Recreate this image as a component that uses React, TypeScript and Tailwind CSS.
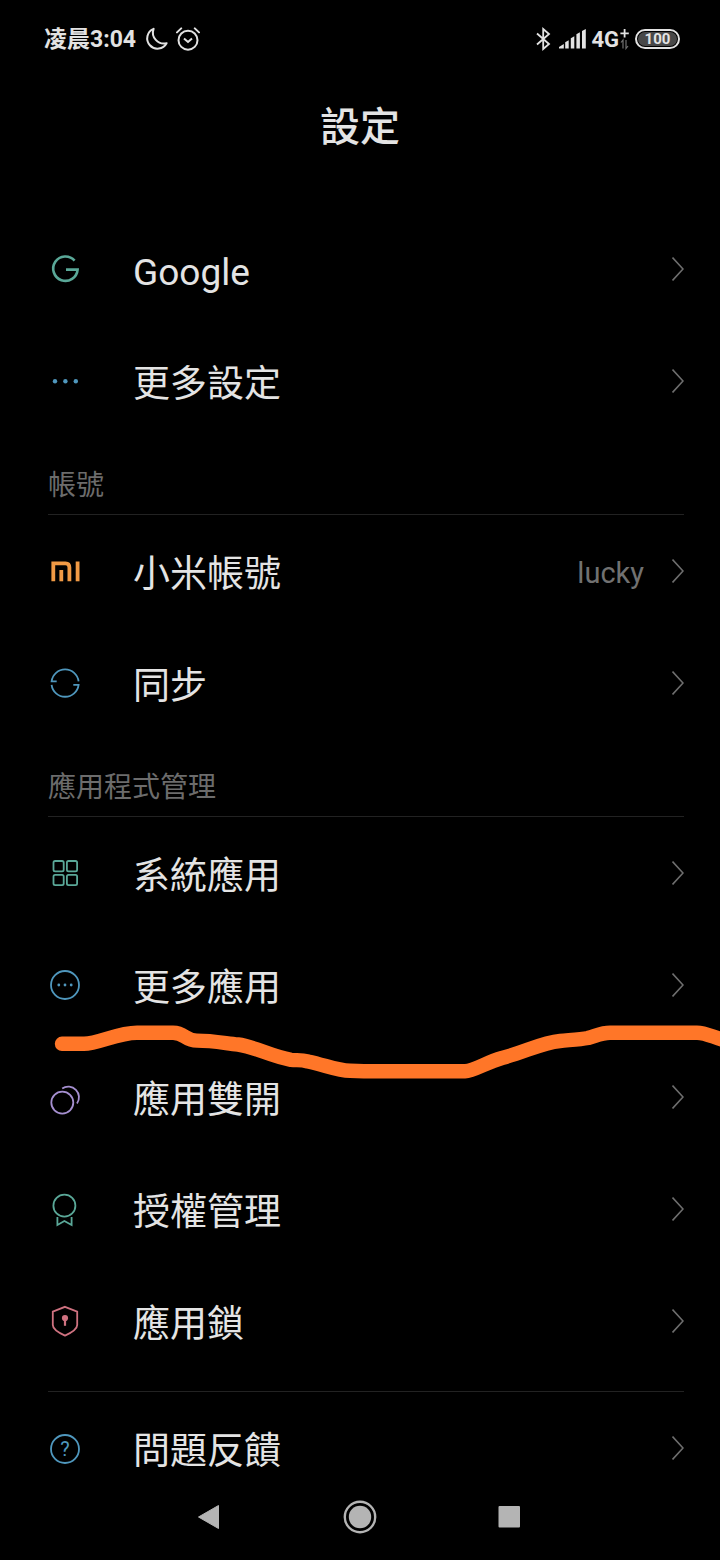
import type { ReactNode } from 'react';

type Item = {
  label: string;
  icon: ReactNode;
  value?: string;
  marked?: boolean;
};

type Section = {
  id: string;
  title?: string;
  divider?: boolean;
  items: Item[];
};

function Icon({ className, children }: { className: string; children: ReactNode }) {
  return (
    <svg
      viewBox="0 0 34 34"
      fill="none"
      stroke="currentColor"
      strokeWidth="1.8"
      className={`size-[34px] shrink-0 overflow-visible ${className}`}
      aria-hidden="true"
    >
      {children}
    </svg>
  );
}

const sections: Section[] = [
  {
    id: 'general',
    items: [
      {
        label: 'Google',
        icon: (
          <Icon className="text-[#5aa898]">
            <path d="M26.6 8.6A12.2 12.2 0 1 0 29.6 17.6H18" strokeWidth="2.6" />
          </Icon>
        ),
      },
      {
        label: '更多設定',
        icon: (
          <Icon className="text-[#4f97bd]">
            <g fill="currentColor" stroke="none">
              <circle cx="7" cy="17.2" r="2.2" />
              <circle cx="17.4" cy="17.2" r="2.2" />
              <circle cx="27.8" cy="17.2" r="2.2" />
            </g>
          </Icon>
        ),
      },
    ],
  },
  {
    id: 'account',
    title: '帳號',
    items: [
      {
        label: '小米帳號',
        value: 'lucky',
        icon: (
          <Icon className="text-[#f19a45]">
            <g strokeWidth="3.8">
              <path d="M5.3 27.3V9.4H17.5Q21.4 9.4 21.4 13.6V27.3" />
              <path d="M13.3 16V27.3" />
              <path d="M29.6 7.5V27.3" />
            </g>
          </Icon>
        ),
      },
      {
        label: '同步',
        icon: (
          <Icon className="text-[#4f97bd]">
            <path d="M8.7 15.4H3.6A13.6 13.6 0 0 1 30.6 15.4" />
            <path d="M25.3 18.8H30.6A13.6 13.6 0 0 1 3.6 18.8" />
          </Icon>
        ),
      },
    ],
  },
  {
    id: 'apps',
    title: '應用程式管理',
    items: [
      {
        label: '系統應用',
        icon: (
          <Icon className="text-[#5aa898]">
            <rect x="5.5" y="5" width="10.2" height="10.4" rx="1.6" />
            <rect x="18.9" y="5" width="10.2" height="10.4" rx="1.6" />
            <rect x="5.5" y="18.8" width="10.2" height="10.4" rx="1.6" />
            <rect x="18.9" y="18.8" width="10.2" height="10.4" rx="1.6" />
          </Icon>
        ),
      },
      {
        label: '更多應用',
        marked: true,
        icon: (
          <Icon className="text-[#4f97bd]">
            <circle cx="17" cy="17" r="14" />
            <g fill="currentColor" stroke="none">
              <circle cx="10.8" cy="17" r="1.4" />
              <circle cx="17" cy="17" r="1.4" />
              <circle cx="23.2" cy="17" r="1.4" />
            </g>
          </Icon>
        ),
      },
      {
        label: '應用雙開',
        icon: (
          <Icon className="text-[#a58fd0]">
            <circle cx="14.3" cy="22.6" r="11" />
            <path d="M14.2 8.5A10.7 10.7 0 0 1 29 23.5" />
          </Icon>
        ),
      },
      {
        label: '授權管理',
        icon: (
          <Icon className="text-[#5aa898]">
            <circle cx="16.4" cy="13.7" r="11" />
            <path d="M9.4 25V33L16.4 29L23.6 33V25" />
          </Icon>
        ),
      },
      {
        label: '應用鎖',
        icon: (
          <Icon className="text-[#cf7280]">
            <path d="M17 2.8L29.2 7.6V21C29.2 24.5 24.5 28.2 17 31.6C9.5 28.2 4.8 24.5 4.8 21V7.6Z" />
            <circle cx="17" cy="14" r="3.1" fill="currentColor" stroke="none" />
            <path d="M17 14V21.8" strokeWidth="2.2" />
          </Icon>
        ),
      },
    ],
  },
  {
    id: 'feedback',
    divider: true,
    items: [
      {
        label: '問題反饋',
        icon: (
          <Icon className="text-[#4f97bd]">
            <circle cx="17" cy="18" r="14" />
            <text
              x="17"
              y="25"
              textAnchor="middle"
              fill="currentColor"
              stroke="none"
              className="font-[Roboto,sans-serif] text-[20px]"
            >
              ?
            </text>
          </Icon>
        ),
      },
    ],
  },
];

function StatusBar() {
  return (
    <div className="flex h-[78px] shrink-0 items-center justify-between pr-10 pl-11 text-[#e2e2e2]">
      <div className="flex items-center gap-2">
        <span className="pt-0.5 text-[23px] leading-8 font-bold">凌晨3:04</span>
        <svg viewBox="0 0 24 24" fill="none" stroke="currentColor" strokeWidth="2" strokeLinejoin="round" className="size-6" aria-hidden="true">
          <path d="M9.6 1.8A10.3 10.3 0 1 0 22.6 16.2A11 11 0 0 1 9.6 1.8Z" />
        </svg>
        <svg viewBox="0 0 24 24" fill="none" stroke="currentColor" strokeWidth="2" className="size-6" aria-hidden="true">
          <circle cx="12" cy="13.2" r="9.5" />
          <path d="M8 11.5L12 15L16 11.5" />
          <path d="M1 5.4L5.2 1.4M23 5.4L18.8 1.4" strokeLinecap="round" />
        </svg>
      </div>

      <div className="flex items-center">
        <svg viewBox="0 0 16 24" fill="none" stroke="currentColor" strokeWidth="1.8" className="h-6 w-4" aria-hidden="true">
          <path d="M2 6.5L14 17L8.2 22V2L14 7L2 17.5" />
        </svg>
        <svg viewBox="0 0 28 20" fill="currentColor" className="ml-2 h-5 w-7" aria-hidden="true">
          <path d="M0 19.5V18L4.8 15V19.5Z" />
          <path d="M6.2 19.5V13.2L9.7 11.2V19.5Z" />
          <path d="M11.8 19.5V9.3L15.3 7.3V19.5Z" />
          <path d="M17.4 19.5V5.3L20.9 3.3V19.5Z" />
          <path d="M23 19.5V2L26.8 0V19.5Z" />
        </svg>
        <span className="ml-1 pt-0.5 text-[22px] leading-8 font-bold">4G</span>
        <svg viewBox="0 0 10 22" fill="none" stroke="currentColor" className="h-[22px] w-2.5" aria-hidden="true">
          <path d="M5.6 1V9.6M1.4 5.3H9.8" strokeWidth="1.8" />
          <path d="M4 20.5V12L2 14.5M7 12V20.5L9 18" strokeWidth="1.2" opacity="0.5" />
        </svg>
        <span className="ml-1.5 flex h-5 w-[45px] items-center justify-center rounded-full border-2 border-current p-px">
          <span className="flex h-full w-full items-center justify-center rounded-full bg-[#484848] text-[15px] leading-none font-bold">
            100
          </span>
        </span>
      </div>
    </div>
  );
}

function Scribble() {
  return (
    <svg
      viewBox="0 0 720 80"
      fill="none"
      className="pointer-events-none absolute top-20 left-0 z-10 w-full"
      aria-hidden="true"
    >
      <path
        d="M62 34.8H84C98 34.8 118 23.7 137 23.7H173C185 23.7 185 31.6 197 31.6C212 31.6 224 34 238 35.5C256 38 270 47 291 50.8C297 51.5 301 50.5 308 52.5C325 56 337 61.5 350 61.8L364 62.3H465C474 62 486 53.5 502 49C524 43.5 542 33.5 560 32C570 31 580 30.5 588 29C598 26 602 23.7 610 23.7H697C706 23.7 712 28 730 33"
        stroke="#ff7628"
        strokeWidth="14.4"
        strokeLinecap="round"
        strokeLinejoin="round"
      />
    </svg>
  );
}

function Row({ item }: { item: Item }) {
  return (
    <li className="relative">
      <button type="button" className="flex h-28 w-full items-center pr-9 pl-12 text-left">
        {item.icon}
        <span className="ml-[51px] flex-1 pt-[7px] text-[37px] leading-[52px] text-[#e4e4e4]">{item.label}</span>
        {item.value && <span className="mr-7 pt-[3px] text-[29px] leading-10 text-[#717171]">{item.value}</span>}
        <svg viewBox="0 0 12 24" fill="none" stroke="#6e6e6e" strokeWidth="1.6" className="h-6 w-3 shrink-0" aria-hidden="true">
          <path d="M0.5 0.5L11 12L0.5 23.5" />
        </svg>
      </button>
      {item.marked && <Scribble />}
    </li>
  );
}

function NavBar() {
  return (
    <nav className="flex h-[86px] shrink-0 items-center justify-center bg-black text-[#b4b4b4]">
      <button type="button" aria-label="返回" className="flex w-[150px] justify-center">
        <svg viewBox="0 0 34 34" fill="currentColor" stroke="currentColor" strokeLinejoin="round" className="size-[34px]">
          <path d="M5.5 17L25.5 5.5V28.5Z" />
        </svg>
      </button>
      <button type="button" aria-label="主畫面" className="flex w-[150px] justify-center">
        <svg viewBox="0 0 34 34" fill="none" className="size-[34px]">
          <circle cx="17" cy="17" r="15.2" stroke="currentColor" strokeWidth="2.4" />
          <circle cx="17" cy="17" r="11.2" fill="currentColor" />
        </svg>
      </button>
      <button type="button" aria-label="最近使用" className="flex w-[150px] justify-center">
        <svg viewBox="0 0 34 34" fill="currentColor" className="size-[34px]">
          <rect x="5.5" y="6" width="21.5" height="21.5" rx="1" />
        </svg>
      </button>
    </nav>
  );
}

export default function App() {
  return (
    <div
      lang="zh-Hant"
      className="flex h-screen flex-col bg-black font-[Roboto,'Noto_Sans_CJK_TC',sans-serif]"
    >
      <StatusBar />
      <h1 className="flex h-24 shrink-0 items-center justify-center pt-[3px] text-[40px] font-medium text-[#e4e4e4]">
        設定
      </h1>

      <main className="min-h-0 flex-1 overflow-y-auto pt-[39px] [scrollbar-width:none]">
        {sections.map((section) => (
          <section key={section.id}>
            {section.title && (
              <h2 className="mr-9 ml-12 flex h-[78px] items-end border-b border-[#222222] pb-2 text-[28px] leading-10 text-[#6c6c6c]">
                {section.title}
              </h2>
            )}
            {section.divider && <hr className="mt-3.5 mr-9 ml-12 border-[#222222]" />}
            <ul>
              {section.items.map((item) => (
                <Row key={item.label} item={item} />
              ))}
            </ul>
          </section>
        ))}
      </main>

      <NavBar />
    </div>
  );
}
